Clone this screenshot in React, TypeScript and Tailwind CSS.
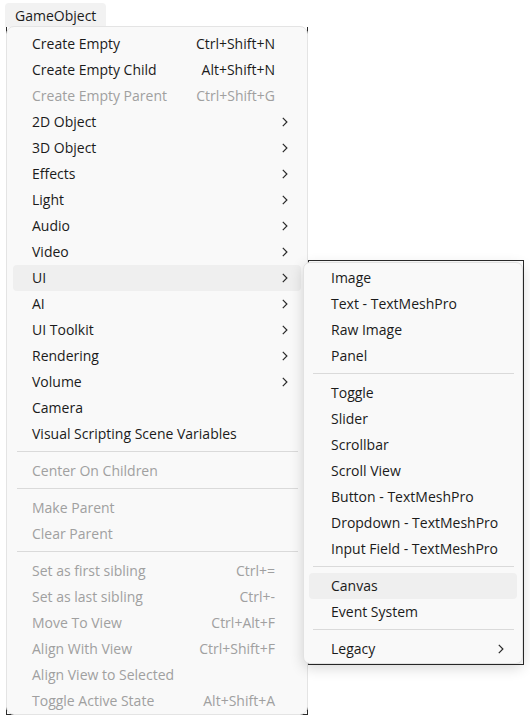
import React from 'react';

type Item =
  | { kind: 'item'; label: string; shortcut?: string; disabled?: boolean; sub?: boolean; hover?: boolean }
  | { kind: 'sep' };

const it = (label: string, opts: Partial<{ shortcut: string; disabled: boolean; sub: boolean; hover: boolean }> = {}): Item => ({
  kind: 'item',
  label,
  ...opts,
});
const sep: Item = { kind: 'sep' };

const mainItems: Item[] = [
  it('Create Empty', { shortcut: 'Ctrl+Shift+N' }),
  it('Create Empty Child', { shortcut: 'Alt+Shift+N' }),
  it('Create Empty Parent', { shortcut: 'Ctrl+Shift+G', disabled: true }),
  it('2D Object', { sub: true }),
  it('3D Object', { sub: true }),
  it('Effects', { sub: true }),
  it('Light', { sub: true }),
  it('Audio', { sub: true }),
  it('Video', { sub: true }),
  it('UI', { sub: true, hover: true }),
  it('AI', { sub: true }),
  it('UI Toolkit', { sub: true }),
  it('Rendering', { sub: true }),
  it('Volume', { sub: true }),
  it('Camera'),
  it('Visual Scripting Scene Variables'),
  sep,
  it('Center On Children', { disabled: true }),
  sep,
  it('Make Parent', { disabled: true }),
  it('Clear Parent', { disabled: true }),
  sep,
  it('Set as first sibling', { shortcut: 'Ctrl+=', disabled: true }),
  it('Set as last sibling', { shortcut: 'Ctrl+-', disabled: true }),
  it('Move To View', { shortcut: 'Ctrl+Alt+F', disabled: true }),
  it('Align With View', { shortcut: 'Ctrl+Shift+F', disabled: true }),
  it('Align View to Selected', { disabled: true }),
  it('Toggle Active State', { shortcut: 'Alt+Shift+A', disabled: true }),
];

const uiItems: Item[] = [
  it('Image'),
  it('Text - TextMeshPro'),
  it('Raw Image'),
  it('Panel'),
  sep,
  it('Toggle'),
  it('Slider'),
  it('Scrollbar'),
  it('Scroll View'),
  it('Button - TextMeshPro'),
  it('Dropdown - TextMeshPro'),
  it('Input Field - TextMeshPro'),
  sep,
  it('Canvas', { hover: true }),
  it('Event System'),
  sep,
  it('Legacy', { sub: true }),
];

function Chevron() {
  return (
    <svg width="6" height="10" viewBox="0 0 6 10" className="shrink-0">
      <path d="M0.8 0.8 L4.9 5 L0.8 9.2" fill="none" stroke="#2b2b2b" strokeWidth="1.2" />
    </svg>
  );
}

function MenuList({ items, rowClass, sepClass }: { items: Item[]; rowClass: string; sepClass: string }) {
  return (
    <>
      {items.map((item, i) =>
        item.kind === 'sep' ? (
          <div key={i} className="pt-[4px] pb-[6px]">
            <div className={`h-px bg-[#dadada] ${sepClass}`} />
          </div>
        ) : (
          <div
            key={i}
            className={`flex h-[26px] items-center rounded-[4px] ${rowClass} ${item.hover ? 'bg-[#efefef]' : ''} ${
              item.disabled ? 'text-[#a0a0a0]' : 'text-[#1b1b1b]'
            }`}
          >
            <span className="flex-1 whitespace-nowrap">{item.label}</span>
            {item.shortcut ? <span className="mr-[13px] whitespace-nowrap">{item.shortcut}</span> : null}
            {item.sub ? <Chevron /> : null}
          </div>
        ),
      )}
    </>
  );
}

export default function App() {
  return (
    <div
      className="relative h-[720px] w-[530px] overflow-hidden bg-white text-[14px] leading-[20px]"
      style={{ fontFamily: '"Open Sans", "Noto Sans", sans-serif' }}
    >
      <div className="ml-[5px] mt-[3px] flex h-[24px] w-[101px] items-center rounded-t-[4px] bg-[#f2f2f2] pt-[2px] pl-[10px] text-[#1b1b1b]">
        GameObject
      </div>

      <div className="ml-[6px] w-[302px] border-x border-b border-[#2b2b2b]">
        <div className="rounded-[7px] bg-[#f9f9f9] pt-[4px] outline outline-1 outline-[#e4e4e4]">
          <MenuList items={mainItems} rowClass="mx-[6px] pl-[19px] pr-[13px]" sepClass="ml-[10px] mr-[9px]" />
        </div>
      </div>

      <div className="absolute left-[308px] top-[260px] h-[405px] w-[216px] border border-[#2b2b2b]" />
      <div className="absolute left-[303px] top-[262px] w-[220px] rounded-[7px] border border-[#e2e2e2] bg-[#f9f9f9] pt-[2px] pb-[1px] shadow-[0_4px_14px_rgba(0,0,0,0.16)]">
        <MenuList items={uiItems} rowClass="mx-[5px] pl-[22px] pr-[13px]" sepClass="ml-[9px] mr-[8px]" />
      </div>
    </div>
  );
}
